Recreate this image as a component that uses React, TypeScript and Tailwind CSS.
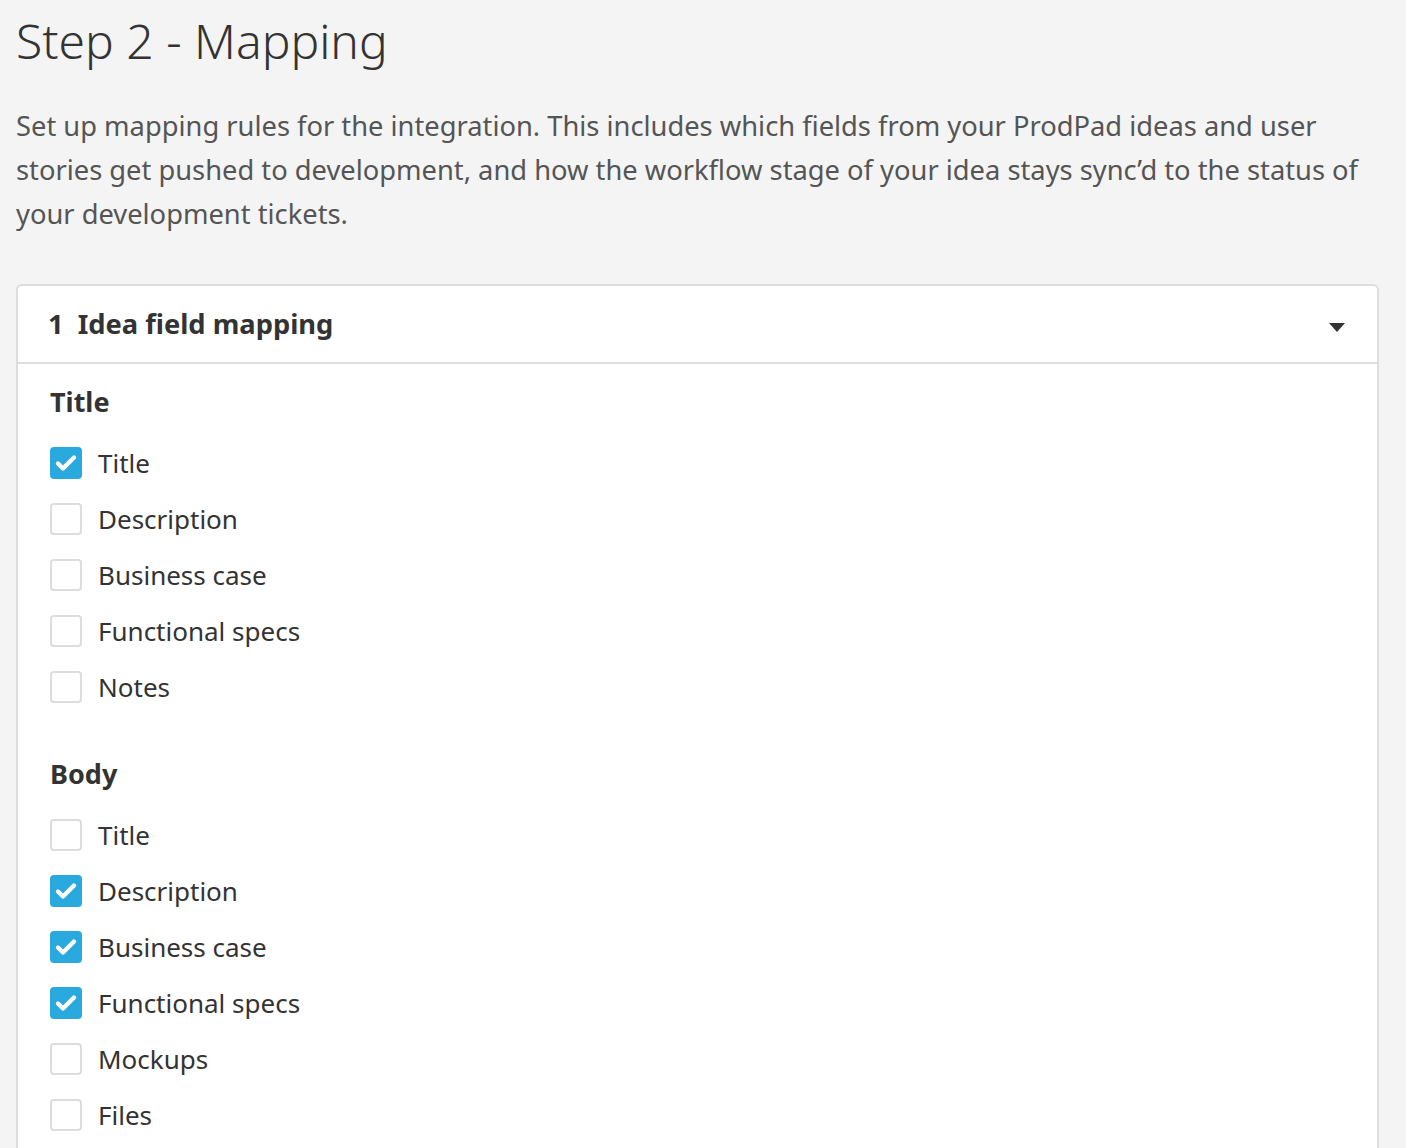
import * as React from "react";

const titleFields = [
  { label: "Title", checked: true },
  { label: "Description", checked: false },
  { label: "Business case", checked: false },
  { label: "Functional specs", checked: false },
  { label: "Notes", checked: false },
];

const bodyFields = [
  { label: "Title", checked: false },
  { label: "Description", checked: true },
  { label: "Business case", checked: true },
  { label: "Functional specs", checked: true },
  { label: "Mockups", checked: false },
  { label: "Files", checked: false },
];

function Checkbox({ checked }: { checked: boolean }) {
  if (checked) {
    return (
      <span className="h-8 w-8 shrink-0 rounded-[4px] bg-[#29a9dd]">
        <svg viewBox="0 0 32 32" width="32" height="32" fill="none">
          <path
            d="M8 16.5l5 5L24 10.5"
            stroke="white"
            strokeWidth="4.4"
            strokeLinecap="round"
            strokeLinejoin="round"
          />
        </svg>
      </span>
    );
  }
  return (
    <span className="h-8 w-8 shrink-0 rounded-[4px] border-2 border-[#dddddd] bg-white" />
  );
}

function FieldGroup({ heading, fields }: { heading: string; fields: { label: string; checked: boolean }[] }) {
  return (
    <div>
      <h3 className="text-[27px] font-bold leading-[40px] text-[#333]">{heading}</h3>
      <div className="mt-[25px] flex flex-col gap-6">
        {fields.map((f, i) => (
          <label key={i} className="flex h-8 items-center gap-4">
            <Checkbox checked={f.checked} />
            <span className="text-[26px] leading-8 text-[#333]">{f.label}</span>
          </label>
        ))}
      </div>
    </div>
  );
}

export default function App() {
  return (
    <div
      className="min-h-screen bg-[#f4f4f4] px-4 pt-[6px]"
      style={{ fontFamily: '"Noto Sans", "Open Sans", sans-serif' }}
    >
      <h1 className="text-[48px] font-light leading-[70px] text-[#333]">Step 2 - Mapping</h1>
      <p className="mt-[28px] pr-4 text-[27.3px] leading-[44px] text-[#555]">
        Set up mapping rules for the integration. This includes which fields from your ProdPad ideas and user
        stories get pushed to development, and how the workflow stage of your idea stays sync’d to the status of
        your development tickets.
      </p>

      <div className="mt-[48px] w-[1363px] rounded-t-[6px] border-2 border-[#dddddd] bg-white">
        <div className="flex h-[78px] items-center justify-between border-b-2 border-[#dddddd] pl-[30px] pr-[32px]">
          <h2 className="text-[27.3px] font-bold text-[#333]">
            <span className="mr-[14px]">1</span>Idea field mapping
          </h2>
          <svg viewBox="0 0 16 10" className="mt-[8px] h-[10px] w-[16px]" fill="#333">
            <path d="M0 0h16L8 9z" />
          </svg>
        </div>
        <div className="px-[32px] pb-10 pt-[18px]">
          <FieldGroup heading="Title" fields={titleFields} />
          <div className="mt-[51px]">
            <FieldGroup heading="Body" fields={bodyFields} />
          </div>
        </div>
      </div>
    </div>
  );
}
